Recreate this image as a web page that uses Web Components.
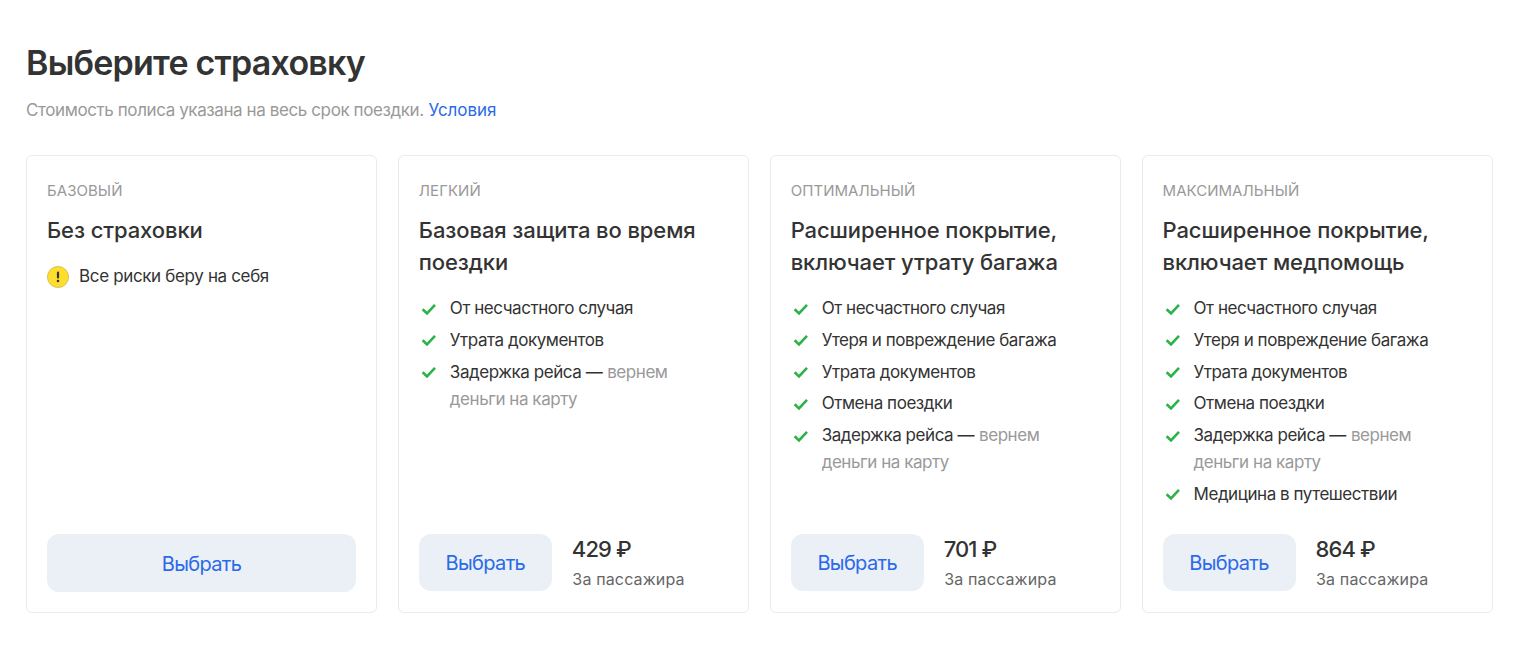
<!DOCTYPE html>
<html lang="ru"><head><meta charset="utf-8"><style>
html,body{margin:0;background:#fff;font-family:Inter,"Noto Sans",sans-serif;color:#333}
</style></head><body>
<x-page>
<span slot="title">Выберите страховку</span>
<span slot="sub">Стоимость полиса указана на весь срок поездки.</span>
<span slot="link">Условия</span>
<x-card tier="БАЗОВЫЙ" wide>
 <span slot="title">Без страховки</span>
 <x-feature warn>Все риски беру на себя</x-feature>
</x-card>
<x-card tier="ЛЕГКИЙ" price="429 ₽">
 <span slot="title">Базовая защита во время поездки</span>
 <x-feature>От несчастного случая</x-feature>
 <x-feature>Утрата документов</x-feature>
 <x-feature note="вернем" note2="деньги на карту">Задержка рейса —</x-feature>
</x-card>
<x-card tier="ОПТИМАЛЬНЫЙ" price="701 ₽">
 <span slot="title">Расширенное покрытие, включает утрату багажа</span>
 <x-feature>От несчастного случая</x-feature>
 <x-feature>Утеря и повреждение багажа</x-feature>
 <x-feature>Утрата документов</x-feature>
 <x-feature>Отмена поездки</x-feature>
 <x-feature note="вернем" note2="деньги на карту">Задержка рейса —</x-feature>
</x-card>
<x-card tier="МАКСИМАЛЬНЫЙ" price="864 ₽">
 <span slot="title">Расширенное покрытие, включает медпомощь</span>
 <x-feature>От несчастного случая</x-feature>
 <x-feature>Утеря и повреждение багажа</x-feature>
 <x-feature>Утрата документов</x-feature>
 <x-feature>Отмена поездки</x-feature>
 <x-feature note="вернем" note2="деньги на карту">Задержка рейса —</x-feature>
 <x-feature>Медицина в путешествии</x-feature>
</x-card>
</x-page>
<script>
class XPage extends HTMLElement{constructor(){super();this.attachShadow({mode:'open'}).innerHTML=`<style>
:host{display:block;padding:41px 27px 0 26px;box-sizing:border-box;width:1520px;height:660px;overflow:hidden}
h1{margin:0;font-size:34px;line-height:44px;font-weight:600;color:#333;letter-spacing:-.77px}
p{margin:12px 0 0;font-size:17px;line-height:26px;color:#999}
.s{letter-spacing:-.4px}
a{color:#2a6ae9;text-decoration:none;letter-spacing:-.03px}
.grid{display:grid;grid-template-columns:repeat(4,351px);gap:20.85px;margin-top:32px}
</style><h1><slot name="title"></slot></h1><p><span class="s"><slot name="sub"></slot></span> <a><slot name="link"></slot></a></p><div class="grid"><slot></slot></div>`}}
customElements.define('x-page',XPage);
class XCard extends HTMLElement{constructor(){super();this.attachShadow({mode:'open'})}
connectedCallback(){const t=this.getAttribute('tier'),p=this.getAttribute('price');
this.shadowRoot.innerHTML=`<style>
:host{display:flex;flex-direction:column;box-sizing:border-box;height:458px;border:1px solid #ebebeb;border-radius:6px;padding:25px 20px 20px;background:#fff}
.tier{font-size:15px;line-height:20px;color:#999;letter-spacing:.05px}
.title{margin-top:13px;font-size:22px;line-height:32px;font-weight:500;color:#333;letter-spacing:-.1px}
.list{margin-top:17px;display:flex;flex-direction:column;flex:1}
.foot{display:flex;align-items:flex-start;gap:21px;height:58px}
.btn{box-sizing:border-box;height:57px;width:133px;border-radius:12px;background:#ebf0f7;color:#2a6ae9;font-size:20px;letter-spacing:-.65px;display:flex;align-items:center;justify-content:center}
:host([wide]) .btn{width:100%;height:58px;padding-top:1px}
.price{font-size:22px;line-height:30px;font-weight:500;color:#333;letter-spacing:-.9px;margin-left:-1px}
.per{font-size:16px;line-height:30px;color:#666;letter-spacing:.15px;margin-left:-.5px}
</style><div class="tier">${t}</div><div class="title"><slot name="title"></slot></div><div class="list"><slot></slot></div>
<div class="foot"><div class="btn">Выбрать</div>${p?`<div><div class="price">${p}</div><div class="per">За пассажира</div></div>`:''}</div>`}}
customElements.define('x-card',XCard);
class XFeature extends HTMLElement{constructor(){super();this.attachShadow({mode:'open'})}
connectedCallback(){const n=this.getAttribute('note'),n2=this.getAttribute('note2'),w=this.hasAttribute('warn');
const icon=w?`<svg width="22" height="22" viewBox="0 0 22 22"><circle cx="11" cy="11" r="10.6" fill="#ffdd2d" stroke="#b9a94a" stroke-width=".6"/><rect x="9.9" y="5.6" width="2.2" height="7" rx="1.1" fill="#333"/><circle cx="11" cy="15" r="1.3" fill="#333"/></svg>`
:`<svg width="22" height="22" viewBox="0 0 22 22"><path d="M3.6 11.3L8 15.4L16 6.9" fill="none" stroke="#2cb24a" stroke-width="2.6"/></svg>`;
this.shadowRoot.innerHTML=`<style>
:host{display:flex;gap:${w?10:9}px;font-size:17px;line-height:27px;color:#333;margin-bottom:4.75px;letter-spacing:-.45px}
:host([warn]){letter-spacing:-.35px}
.i{flex:none;width:22px;height:27px;display:flex;align-items:center}
.n{color:#999}
.row{display:flex;gap:5px}
</style><div class="i">${icon}</div><div><div class="row"><slot></slot>${n?`<span class="n">${n}</span>`:''}</div>${n2?`<div class="n">${n2}</div>`:''}</div>`}}
customElements.define('x-feature',XFeature);
</script></body></html>
